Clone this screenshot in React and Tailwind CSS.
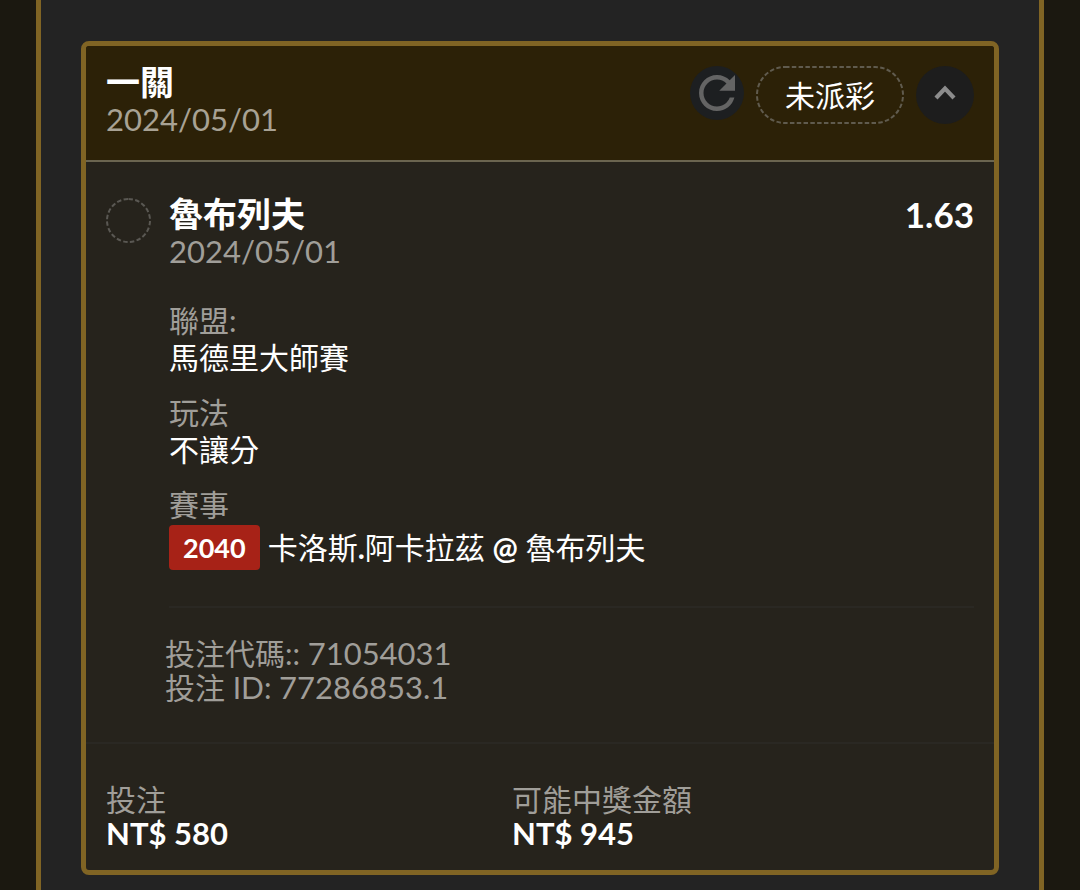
import { useState } from 'react';

const ticket = {
  title: '一關',
  date: '2024/05/01',
  status: '未派彩',
  pick: '魯布列夫',
  pickDate: '2024/05/01',
  odds: '1.63',
  league: '馬德里大師賽',
  market: '不讓分',
  eventNo: '2040',
  away: ['卡洛斯', '阿卡拉茲'],
  home: '魯布列夫',
  code: '71054031',
  betId: '77286853.1',
};

const totals = [
  { label: '投注', value: 'NT$ 580' },
  { label: '可能中獎金額', value: 'NT$ 945' },
];

const RefreshIcon = () => (
  <svg viewBox="0 0 24 24" className="size-full fill-[#646464]" aria-hidden="true">
    <path d="M17.65 6.35C16.2 4.9 14.21 4 12 4c-4.42 0-7.99 3.58-7.99 8s3.57 8 7.99 8c3.73 0 6.84-2.55 7.73-6h-2.08c-.82 2.33-3.04 4-5.65 4-3.31 0-6-2.69-6-6s2.69-6 6-6c1.66 0 3.14.69 4.22 1.78L13 11h7V4l-2.35 2.35z" />
  </svg>
);

const ChevronIcon = ({ open }) => (
  <svg viewBox="0 0 58 58" className={`size-full ${open ? '' : 'rotate-180'}`} aria-hidden="true">
    <path d="M20 32L29 22.5L38 32" fill="none" stroke="#8c8c8c" strokeWidth="4.2" />
  </svg>
);

// dashed ring around a rounded box, finer than the browser's own dashed border
const DashedRing = ({ className }) => (
  <svg className={`absolute inset-0 size-full ${className}`} fill="none" aria-hidden="true">
    <rect
      x="1"
      y="1"
      rx="28"
      className="h-[calc(100%-2px)] w-[calc(100%-2px)]"
      stroke="currentColor"
      strokeWidth="2"
      strokeDasharray="4.5 2.3"
    />
  </svg>
);

const Field = ({ label, children }) => (
  <div>
    <dt className="text-[#a09e99]">{label}</dt>
    <dd className="text-white">{children}</dd>
  </div>
);

const Header = ({ open, onToggle }) => (
  <header className="flex items-start justify-between border-b-2 border-[#6b6550] bg-[#2c2107] px-5 py-5">
    <div>
      <h1 className="text-[34px] leading-8 font-bold text-white">{ticket.title}</h1>
      <p className="text-[31px] leading-[42px] text-[#a8a294]">{ticket.date}</p>
    </div>
    <div className="flex items-start gap-3">
      <button type="button" aria-label="重新整理" className="size-[54px] rounded-full bg-[#1d1f21]">
        <RefreshIcon />
      </button>
      <span className="relative flex h-[58px] items-center px-[29px] text-[30px] text-white">
        <DashedRing className="text-[#605b4e]" />
        {ticket.status}
      </span>
      <button
        type="button"
        aria-label="展開或收合"
        aria-expanded={open}
        onClick={onToggle}
        className="size-[58px] rounded-full bg-[#1d1d1d]"
      >
        <ChevronIcon open={open} />
      </button>
    </div>
  </header>
);

const Selection = () => (
  <section className="flex gap-[14px] px-5 pt-9">
    <span className="relative size-[45px] shrink-0">
      <DashedRing className="text-[#5a5853]" />
    </span>
    <div className="flex-1">
      <div className="flex items-start justify-between pl-1">
        <div>
          <h2 className="text-[34px] leading-8 font-bold text-white">{ticket.pick}</h2>
          <p className="text-[31px] leading-[42px] text-[#a09e99]">{ticket.pickDate}</p>
        </div>
        <strong className="text-[35px] leading-8 font-bold text-white">{ticket.odds}</strong>
      </div>

      <dl className="mt-[30px] flex flex-col gap-[18px] pl-1 text-[30px] leading-[37px]">
        <Field label="聯盟:">{ticket.league}</Field>
        <Field label="玩法">{ticket.market}</Field>
        <Field label="賽事">
          <span className="flex items-center gap-2 pt-0.5">
            <span className="rounded-sm bg-[#a72217] px-[14px] text-[27px] leading-[45px] font-bold">
              {ticket.eventNo}
            </span>
            <span>
              {ticket.away[0]}
              <b>.</b>
              {ticket.away[1]} <b>@</b> {ticket.home}
            </span>
          </span>
        </Field>
      </dl>

      <hr className="mt-9 ml-1 border-t-2 border-[#2a2823]" />
      <div className="pt-7 pb-[38px] text-[30px] leading-[34px] text-[#a09e99]">
        <p>
          投注代碼:: <span className="text-[31px]">{ticket.code}</span>
        </p>
        <p>
          投注 ID: <span className="text-[31px]">{ticket.betId}</span>
        </p>
      </div>
    </div>
  </section>
);

const Totals = () => (
  <dl className="grid grid-cols-[406px_1fr] border-t-2 border-[#2a2823] px-5 pt-[38px] pb-5">
    {totals.map((item) => (
      <div key={item.label}>
        <dt className="text-[30px] leading-[34px] text-[#a09e99]">{item.label}</dt>
        <dd className="text-[31px] leading-[34px] font-bold text-white">{item.value}</dd>
      </div>
    ))}
  </dl>
);

export default function App() {
  const [open, setOpen] = useState(true);

  return (
    <main
      lang="zh-Hant"
      className="min-h-screen bg-[#1b1810] px-9 font-[Lato,'Noto_Sans_CJK_TC',sans-serif]"
    >
      <div className="min-h-screen border-x-[5px] border-[#806424] bg-[#232323] px-10 pt-[41px]">
        <article className="overflow-hidden rounded-lg border-[5px] border-[#806424] bg-[#26231c]">
          <Header open={open} onToggle={() => setOpen(!open)} />
          {open && <Selection />}
          <Totals />
        </article>
      </div>
    </main>
  );
}
